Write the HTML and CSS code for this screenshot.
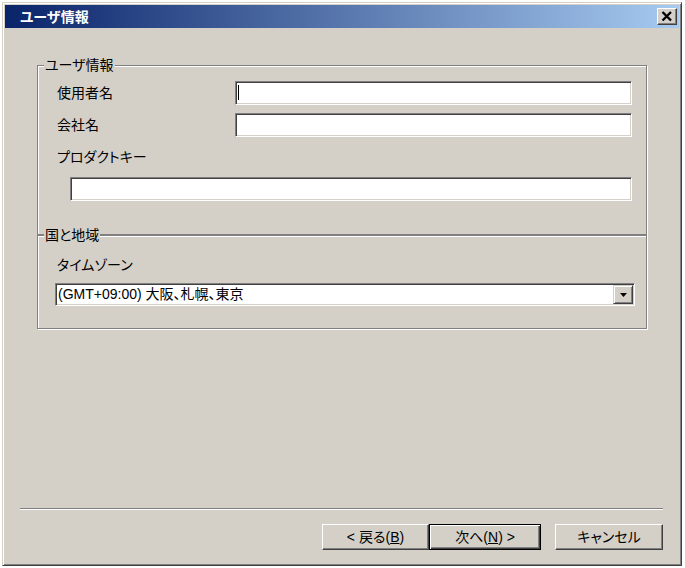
FILE: index.html
```html
<!DOCTYPE html>
<html lang="ja">
<head>
<meta charset="utf-8">
<title>ユーザ情報</title>
<link rel="stylesheet" href="styles.css">
</head>
<body>
<div class="window">
  <div class="titlebar">
    <span class="title">ユーザ情報</span>
    <button class="close" type="button" aria-label="閉じる">
      <svg width="18" height="15" viewBox="0 0 18 15"><path d="M4.5 3 L13 11.5 M13 3 L4.5 11.5" stroke="#000" stroke-width="2.4" fill="none"/></svg>
    </button>
  </div>
  <div class="content">
    <fieldset class="group group-user">
      <legend class="group-label">ユーザ情報</legend>
      <div class="row">
        <label class="row-label">使用者名</label>
        <div class="input"><span class="caret"></span></div>
      </div>
      <div class="row">
        <label class="row-label">会社名</label>
        <div class="input"></div>
      </div>
      <label class="stack-label">プロダクトキー</label>
      <div class="input input-key"></div>
    </fieldset>
    <fieldset class="group group-region">
      <legend class="group-label group-label-region">国と地域</legend>
      <label class="tz-label">タイムゾーン</label>
      <div class="select">
        <span class="select-text">(GMT+09:00) 大阪、札幌、東京</span>
        <span class="drop"><svg width="7" height="4" viewBox="0 0 7 4"><path d="M0 0 H7 L3.5 4 Z" fill="#000"/></svg></span>
      </div>
    </fieldset>
    <div class="footer">
      <div class="separator"></div>
      <div class="buttons">
        <button class="btn btn-back" type="button">&lt; 戻る(<u>B</u>)</button>
        <button class="btn btn-next" type="button">次へ(<u>N</u>) &gt;</button>
        <button class="btn btn-cancel" type="button">キャンセル</button>
      </div>
    </div>
  </div>
</div>
</body>
</html>
```
FILE: styles.css
```css
* { box-sizing: border-box; }
html, body { margin: 0; }
body {
  background: #ffffff;
  font-family: "Liberation Sans", "Noto Sans CJK JP", sans-serif;
  font-size: 14px;
  color: #000;
  font-feature-settings: "palt";
}
.window {
  margin: 2px 0 0 2px;
  width: 680px;
  height: 564px;
  background: #d4d0c8;
  border: 1px solid;
  border-color: #d4d0c8 #404040 #404040 #d4d0c8;
  box-shadow: inset 1px 1px #ffffff, inset -1px -1px #808080;
  padding: 2px;
  display: flex;
  flex-direction: column;
}
.titlebar {
  height: 23px;
  display: flex;
  align-items: center;
  padding-left: 15px;
  background: linear-gradient(to right, #0a246a, #a6caf0);
}
.title {
  color: #fff;
  font-weight: bold;
  line-height: 16px;
}
.close {
  margin-left: auto;
  margin-right: 2px;
  width: 20px;
  height: 17px;
  padding: 0;
  background: #d4d0c8;
  border: 1px solid;
  border-color: #ffffff #404040 #404040 #ffffff;
  box-shadow: inset -1px -1px #808080;
  display: flex;
  align-items: center;
  justify-content: center;
}
.close svg { display: block; }
.content {
  flex: 1;
  display: flex;
  flex-direction: column;
  padding-top: 29px;
}
.group {
  margin: 0 32px;
  min-width: 0;
  border: 1px solid #808080;
  box-shadow: inset 1px 1px #ffffff, 1px 1px #ffffff;
}
.group-label {
  padding: 0 1px;
  line-height: 16px;
  background: #d4d0c8;
}
.group-user {
  padding: 8px 14px 33px 19px;
}
.group-user .group-label { margin-left: -13px; }
.group-region {
  margin-top: -8px;
  padding: 14px 11px 22px 17px;
}
.group-label-region { margin-left: -11px; }
.row {
  display: grid;
  grid-template-columns: 178px 1fr;
  align-items: center;
}
.row + .row { margin-top: 8px; }
.row-label { line-height: 16px; }
.input {
  height: 24px;
  background: #fff;
  border: 1px solid;
  border-color: #808080 #ffffff #ffffff #808080;
  box-shadow: inset 1px 1px #404040, inset -1px -1px #d4d0c8;
}
.caret {
  display: block;
  width: 1px;
  height: 15px;
  margin: 3px 0 0 2px;
  background: #000;
}
.stack-label {
  display: block;
  margin-top: 12px;
  line-height: 16px;
}
.input-key { margin: 12px 0 0 13px; }
.tz-label {
  display: block;
  margin-left: 2px;
  line-height: 16px;
}
.select {
  display: flex;
  align-items: stretch;
  height: 23px;
  margin-top: 10px;
  background: #fff;
  border: 1px solid;
  border-color: #808080 #ffffff #ffffff #808080;
  box-shadow: inset 1px 1px #404040, inset -1px -1px #d4d0c8;
  padding: 1px 1px 1px 2px;
}
.select-text {
  flex: 1;
  line-height: 19px;
  white-space: nowrap;
}
.drop {
  width: 20px;
  background: #d4d0c8;
  border: 1px solid;
  border-color: #d4d0c8 #404040 #404040 #d4d0c8;
  box-shadow: inset 1px 1px #ffffff, inset -1px -1px #808080;
  display: flex;
  align-items: center;
  justify-content: center;
}
.drop svg { display: block; }
.footer {
  margin-top: auto;
  padding: 0 16px 13px 15px;
}
.separator {
  height: 2px;
  border-top: 1px solid #808080;
  border-bottom: 1px solid #ffffff;
}
.buttons {
  display: flex;
  justify-content: flex-end;
  margin-top: 14px;
}
.btn {
  height: 26px;
  width: 107px;
  padding: 0;
  font: inherit;
  color: #000;
  line-height: 16px;
  background: #d4d0c8;
  border: 1px solid;
  border-color: #ffffff #404040 #404040 #ffffff;
  box-shadow: inset -1px -1px #808080;
}
.btn-next {
  width: 112px;
  border-color: #000;
  box-shadow: inset 1px 1px #ffffff, inset -1px -1px #404040, inset -2px -2px #808080;
}
.btn-cancel {
  width: 108px;
  margin-left: 14px;
}
```
